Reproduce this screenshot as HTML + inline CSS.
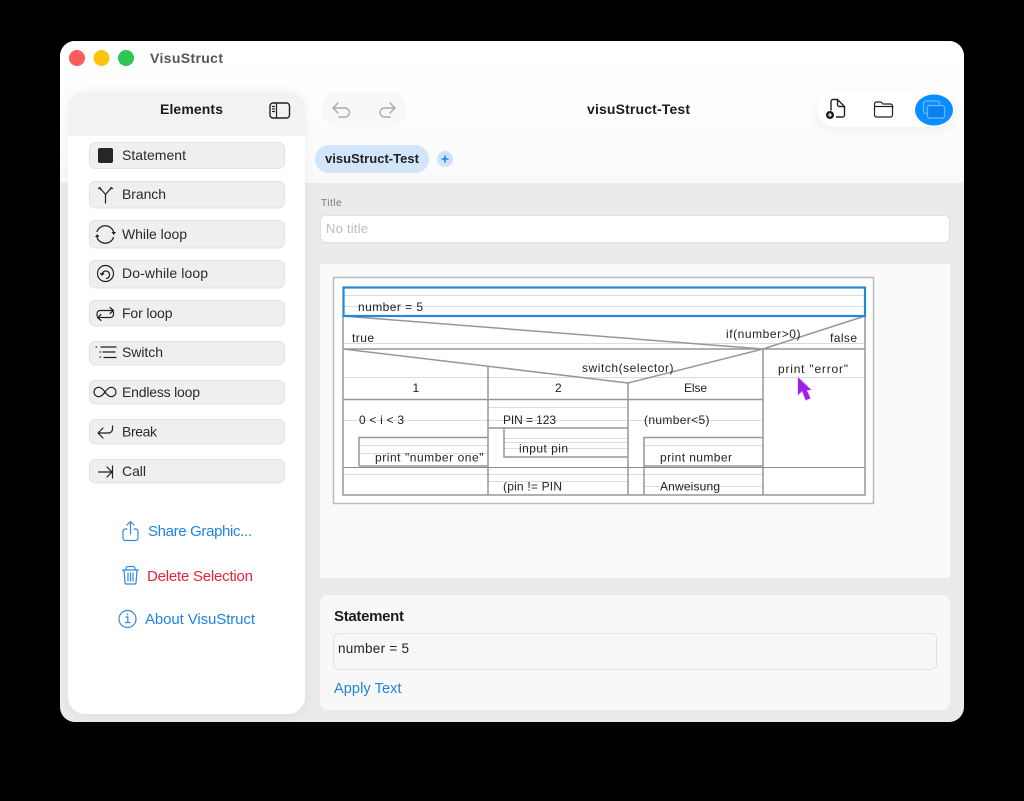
<!DOCTYPE html>
<html><head><meta charset="utf-8"><style>
html,body{margin:0;padding:0;background:#000;width:1024px;height:801px;overflow:hidden}
svg{display:block;font-family:"Liberation Sans",sans-serif}
.b{fill:#efefef;stroke:#e2e2e2;stroke-width:1}
.l{font-size:14px;fill:#2a2a2a}
.d{font-size:12px;fill:#222}
.f{stroke:#dcdcdc;stroke-width:1;fill:none}
.s{stroke:#979797;stroke-width:1.5;fill:none}
.i{fill:none;stroke:#222;stroke-width:1.2;stroke-linecap:round;stroke-linejoin:round}
.a{fill:none;stroke:#2f88e0;stroke-width:1.2;stroke-linecap:round;stroke-linejoin:round}
.t{fill:none;stroke:#222;stroke-width:1.4;stroke-linecap:round;stroke-linejoin:round}
.u{fill:none;stroke:#aaa;stroke-width:1.4;stroke-linecap:round;stroke-linejoin:round}
</style></head><body>
<svg width="1024" height="801" viewBox="0 0 1024 801" xmlns="http://www.w3.org/2000/svg">
<defs>
<filter id="sh" x="-20%" y="-20%" width="140%" height="140%"><feGaussianBlur stdDeviation="6"/></filter>
<linearGradient id="top" x1="0" y1="0" x2="0" y2="1"><stop offset="0" stop-color="#fff"/><stop offset=".45" stop-color="#fefefe"/><stop offset="1" stop-color="#fafafa"/></linearGradient>
<clipPath id="win"><rect x="60" y="41" width="904" height="681" rx="15"/></clipPath>
<clipPath id="side"><rect x="68" y="92" width="237" height="622" rx="17"/></clipPath>
</defs>
<rect width="1024" height="801" fill="#000"/>
<g clip-path="url(#win)">
<rect x="60" y="41" width="904" height="681" fill="#ebebeb"/>
<rect x="60" y="41" width="904" height="142" fill="url(#top)"/>
<rect x="66" y="90" width="241" height="628" rx="18" fill="#000" opacity=".04" filter="url(#sh)"/>
</g>
<circle cx="77" cy="58" r="8" fill="#ff5a5f"/><circle cx="101.500" cy="58" r="8" fill="#ffc30b"/><circle cx="126" cy="58" r="8" fill="#2bc653"/>
<text x="150" y="63" font-size="14" font-weight="700" fill="#565656" textLength="73" lengthAdjust="spacing">VisuStruct</text>

<g clip-path="url(#side)">
<rect x="68" y="92" width="237" height="622" fill="#fff"/>
<rect x="68" y="92" width="237" height="44" fill="#f2f2f2"/>
</g>
<text x="160" y="114" font-size="14" font-weight="700" fill="#1c1c1c" textLength="63" lengthAdjust="spacing">Elements</text>
<rect x="270" y="103" width="19.500" height="15" rx="3" class="t"/>
<path d="M276.500 103v15M272.500 106.500h2M272.500 109h2M272.500 111.500h2" class="i"/>

<rect class="b" x="89.500" y="142.500" width="195" height="26" rx="6"/>
<rect class="b" x="89.500" y="181.500" width="195" height="26.500" rx="6"/>
<rect class="b" x="89.500" y="220.500" width="195" height="27.500" rx="6"/>
<rect class="b" x="89.500" y="260.500" width="195" height="27.500" rx="6"/>
<rect class="b" x="89.500" y="300.500" width="195" height="25.500" rx="6"/>
<rect class="b" x="89.500" y="341.500" width="195" height="23.500" rx="6"/>
<rect class="b" x="89.500" y="380.500" width="195" height="23.500" rx="6"/>
<rect class="b" x="89.500" y="419.500" width="195" height="24.500" rx="6"/>
<rect class="b" x="89.500" y="459.500" width="195" height="23.500" rx="6"/>

<rect x="98" y="148" width="15" height="15" rx="2" fill="#262626"/>
<path d="M105.500 203V194.500L100 188M105.500 194.500L111 188M98.500 188.500L100 187.500L100.500 189.500M112.500 188.500L111 187.500L110.500 189.500" class="i"/>
<path d="M97 231.500A8.800 8.800 0 0 1 113.500 231.500M113.500 237.500A8.800 8.800 0 0 1 97 237.500" class="i"/>
<path d="M111.500 232h4.500l-2.200 3zM95 237h4.500l-2.200-3z" fill="#222"/>
<circle cx="105.500" cy="273.500" r="8" class="i"/>
<path d="M102 275a3.800 3.800 0 1 1 4.500 3.500M102 275l-1.500-1.500M102 275l1.700-1.500" class="i"/>
<path d="M97 316v-2.500a3 3 0 0 1 3-3h13M110 307.500l3.500 3-3.500 3M113.500 312v2.500a3 3 0 0 1-3 3H98M101 314.500l-3.500 3 3.500 3" class="i"/>
<path d="M96 347h.5M100 352h.5M100 357h.5M101 347h15M103 352h12M104 357.500h12" class="i"/>
<path d="M105 392c-2.200-3.200-4.200-4.700-6.300-4.700a4.700 4.700 0 0 0 0 9.400c2.100 0 4.100-1.500 6.300-4.700c2.200-3.200 4.200-4.700 6.300-4.700a4.700 4.700 0 0 1 0 9.400c-2.100 0-4.100-1.500-6.300-4.700z" class="i"/>
<path d="M112.500 426v3a4 4 0 0 1-4 4H98M103 428l-5 5 5 5" class="i"/>
<path d="M98.500 472h13M107 467l5 5-5 5M112.500 466v12" class="i"/>

<text class="l" x="122" y="160" textLength="64" lengthAdjust="spacing">Statement</text>
<text class="l" x="122" y="199" textLength="44" lengthAdjust="spacing">Branch</text>
<text class="l" x="122" y="239" textLength="65" lengthAdjust="spacing">While loop</text>
<text class="l" x="122" y="278" textLength="86" lengthAdjust="spacing">Do-while loop</text>
<text class="l" x="122" y="318" textLength="50.500" lengthAdjust="spacing">For loop</text>
<text class="l" x="122" y="357" textLength="41" lengthAdjust="spacing">Switch</text>
<text class="l" x="122" y="397" textLength="78" lengthAdjust="spacing">Endless loop</text>
<text class="l" x="122" y="436.500" textLength="35" lengthAdjust="spacing">Break</text>
<text class="l" x="122" y="476" textLength="24" lengthAdjust="spacing">Call</text>

<path d="M127 529h-1.500a2.500 2.500 0 0 0-2.500 2.500v6.500a2.500 2.500 0 0 0 2.500 2.500h10a2.500 2.500 0 0 0 2.500-2.500v-6.500a2.500 2.500 0 0 0-2.500-2.500H134M130.500 534V522M127 525l3.500-3.500 3.500 3.500" class="a"/>
<path d="M122.500 570h16M126 570v-1.500a2 2 0 0 1 2-2h5a2 2 0 0 1 2 2v1.500M124 570l1 13a1.500 1.500 0 0 0 1.500 1h8a1.500 1.500 0 0 0 1.500-1l1-13M128 573v8M130.500 573v8M133 573v8" class="a"/>
<circle cx="127.500" cy="619" r="8.500" class="a"/>
<path d="M126 617h1.800v5.500M125.500 622.500h4.500" class="a"/><circle cx="127.500" cy="614.500" r=".9" fill="#2f88e0"/>
<text x="148" y="536" font-size="15" fill="#1e82e6" textLength="104" lengthAdjust="spacing">Share Graphic...</text>
<text x="147" y="581" font-size="15" fill="#e8233a" textLength="106" lengthAdjust="spacing">Delete Selection</text>
<text x="145" y="624" font-size="15" fill="#1e82e6" textLength="110" lengthAdjust="spacing">About VisuStruct</text>

<rect x="321" y="91" width="86" height="36" rx="18" fill="#f8f8f8"/>
<path d="M338 103L333 108L338 113M333 108H345a4.500 4.500 0 0 1 0 9H339" class="u"/>
<path d="M390 103L395 108L390 113M395 108H384.500a4.500 4.500 0 0 0 0 9H390" class="u"/>
<text x="587" y="114" font-size="14" font-weight="700" fill="#1c1c1c" textLength="103" lengthAdjust="spacing">visuStruct-Test</text>

<rect x="815" y="95" width="140" height="36" rx="18" fill="#000" opacity=".05" filter="url(#sh)"/>
<rect x="817" y="91" width="136" height="36" rx="18" fill="#fff"/>
<path d="M831 110V101.500a2 2 0 0 1 2-2h4.500l7 7v8.500a2 2 0 0 1-2 2h-6M837.500 99.500v5a2 2 0 0 0 2 2h5" class="t"/>
<circle cx="830" cy="115" r="4" fill="#1c1c1c"/><path d="M830 113v4M828 115h4" stroke="#fff" stroke-width="1.100"/>
<path d="M874.500 104a2 2 0 0 1 2-2h4.500l2 2h7.500a2 2 0 0 1 2 2v9a2 2 0 0 1-2 2h-14a2 2 0 0 1-2-2zM874.500 106.500h18.500" class="t" style="stroke-width:1.200"/>
<ellipse cx="934" cy="110" rx="19" ry="15.500" fill="#0a8dff"/>
<rect x="923.500" y="101" width="16" height="12.500" rx="2.500" fill="none" stroke="#64bcff" stroke-width="1.200"/>
<rect x="927.500" y="105.500" width="17" height="12.500" rx="2" fill="#0a80ee" stroke="#64bcff" stroke-width="1.200"/>

<rect x="315" y="145" width="114" height="28" rx="14" fill="#d3e5fb"/>
<text x="325" y="163" font-size="13" font-weight="700" fill="#222" textLength="94" lengthAdjust="spacing">visuStruct-Test</text>
<circle cx="445" cy="159" r="8" fill="#cfe2fa"/><path d="M445 155.500v7M441.500 159h7" stroke="#1e82e6" stroke-width="1.600"/>

<text x="321" y="206" font-size="10" fill="#777" textLength="20.500" lengthAdjust="spacing">Title</text>
<rect x="320.500" y="215.500" width="629" height="27" rx="5" fill="#fff" stroke="#e0e0e0"/>
<text x="326" y="233" font-size="13" fill="#bdbdbd" textLength="42" lengthAdjust="spacing">No title</text>

<rect x="320" y="264" width="630" height="314" fill="#fafafa"/>
<rect x="333.500" y="277.500" width="540" height="226" fill="#fff" stroke="#bcbcbc" stroke-width="1.500"/>

<path class="f" d="M343 295.500H865M343 306.500H865M343 343.500H865M343 377.500H865M488 407.500H628M343 420.500H763M359 445.500H488M504 438.500H628M504 442.500H628M504 448.500H628M644 445.500H763M343 474.500H763M488 481.500H628M644 486.500H763M360 453.500H488"/>
<path class="s" d="M343 316V495H865V316M343 316L763 349M865 316L763 349M343 349H865M343 349L628 383M763 349L628 383M488 366V495M628 383V495M763 349V495M343 399.500H763M488 428H628M504 428V457H628M359 466V437.500H488M359 466H488M644 495V437.500H763M644 466H763"/>
<path d="M343 467.500H865" stroke="#8a8a8a" stroke-width="1" fill="none"/>
<rect x="343.500" y="287.500" width="521.500" height="28.500" fill="none" stroke="#2188de" stroke-width="2.200"/>

<text class="d" x="358" y="311" textLength="65" lengthAdjust="spacing">number = 5</text>
<text class="d" x="352" y="342" textLength="22" lengthAdjust="spacing">true</text>
<text class="d" x="726" y="338" textLength="74.500" lengthAdjust="spacing">if(number&gt;0)</text>
<text class="d" x="830" y="342" textLength="27" lengthAdjust="spacing">false</text>
<text class="d" x="582" y="372" textLength="91.500" lengthAdjust="spacing">switch(selector)</text>
<text class="d" x="778" y="373" textLength="70" lengthAdjust="spacing">print "error"</text>
<text class="d" x="412.500" y="392">1</text>
<text class="d" x="555" y="392">2</text>
<text class="d" x="684" y="392" textLength="23" lengthAdjust="spacing">Else</text>
<text class="d" x="359" y="424" textLength="45" lengthAdjust="spacing">0 &lt; i &lt; 3</text>
<text class="d" x="503" y="424" textLength="53" lengthAdjust="spacing">PIN = 123</text>
<text class="d" x="644" y="424" textLength="65.500" lengthAdjust="spacing">(number&lt;5)</text>
<text class="d" x="519" y="452.500" textLength="49" lengthAdjust="spacing">input pin</text>
<text class="d" x="375" y="461.500" textLength="108.500" lengthAdjust="spacing">print "number one"</text>
<text class="d" x="660" y="461.500" textLength="72" lengthAdjust="spacing">print number</text>
<text class="d" x="660" y="490.500" textLength="60" lengthAdjust="spacing">Anweisung</text>
<text class="d" x="503" y="490.500" textLength="59" lengthAdjust="spacing">(pin != PIN</text>

<path d="M797.500 376L797.500 396L802 392L805.500 401L811 398.500L807.500 390.500L812.500 390.500Z" fill="#a11fec" stroke="#f0e2fb" stroke-width="1"/>

<rect x="320" y="595" width="630" height="115" rx="8" fill="#f8f8f8"/>
<text x="334" y="621" font-size="15" font-weight="700" fill="#1c1c1c" textLength="70" lengthAdjust="spacing">Statement</text>
<rect x="333.500" y="633.500" width="603" height="36" rx="5" fill="#f7f7f7" stroke="#e3e3e3"/>
<text x="338" y="653" font-size="13.500" fill="#222" textLength="71" lengthAdjust="spacing">number = 5</text>
<text x="334" y="693" font-size="14.500" fill="#1e82e6" textLength="67.500" lengthAdjust="spacing">Apply Text</text>
</svg>
</body></html>
